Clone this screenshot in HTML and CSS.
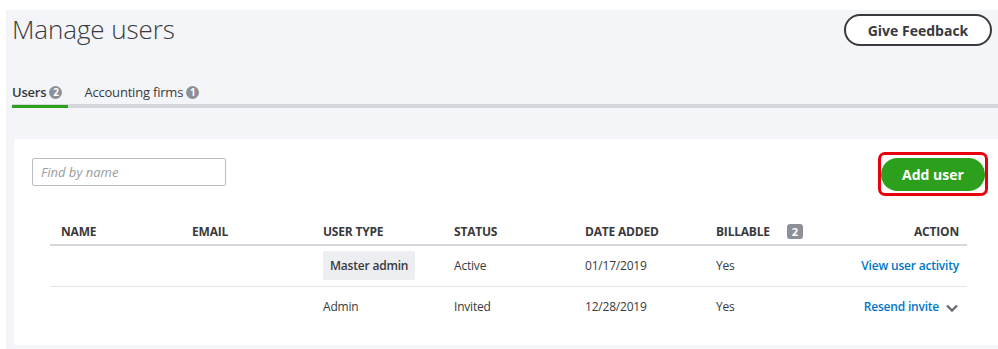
FILE: index.html
```html
<!DOCTYPE html>
<html lang="en">
<head>
  <meta charset="UTF-8">
  <title>Manage users</title>
  <link rel="stylesheet" href="styles.css">
</head>
<body>
  <div class="page">
    <div class="header">
      <h1>Manage users</h1>
      <button class="feedback">Give Feedback</button>
    </div>

    <!-- Tabs -->
    <div class="tabs">
      <div class="tab active">Users <span class="count">2</span></div>
      <div class="tab">Accounting firms <span class="count">1</span></div>
    </div>

    <div class="card">
      <div class="toolbar">
        <input type="text" class="search" placeholder="Find by name">
        <div class="highlight">
          <button class="add-user">Add user</button>
        </div>
      </div>

      <table>
        <thead>
          <tr>
            <th>NAME</th>
            <th>EMAIL</th>
            <th>USER TYPE</th>
            <th>STATUS</th>
            <th>DATE ADDED</th>
            <th>BILLABLE <span class="billable">2</span></th>
            <th class="right">ACTION</th>
          </tr>
        </thead>
        <tbody>
          <tr>
            <td></td>
            <td></td>
            <td><span class="pill">Master admin</span></td>
            <td>Active</td>
            <td>01/17/2019</td>
            <td>Yes</td>
            <td class="right"><a href="#">View user activity</a></td>
          </tr>
          <tr>
            <td></td>
            <td></td>
            <td>Admin</td>
            <td>Invited</td>
            <td>12/28/2019</td>
            <td>Yes</td>
            <td class="right">
              <a href="#">Resend invite</a>
              <svg class="chevron" width="14" height="14" viewBox="0 0 14 14"><path d="M2 4.5l5 5 5-5" fill="none" stroke="#6b6c72" stroke-width="2.4"/></svg>
            </td>
          </tr>
        </tbody>
      </table>
    </div>
  </div>
</body>
</html>
```

FILE: styles.css
```css
* {
  margin: 0;
  padding: 0;
  box-sizing: border-box;
  font-family: 'Open Sans', 'Liberation Sans', sans-serif;
}
body {
  background: #fff;
  color: #393a3d;
  padding: 10px 0 0 6px;
}
.page {
  background: #f4f5f8;
  height: 339px;
  padding: 0 0 0 6px;
}
.header {
  display: flex;
  justify-content: space-between;
  align-items: flex-start;
  padding: 4px 6px 0 0;
}
h1 {
  font-size: 26px;
  font-weight: 300;
  color: #393a3d;
  letter-spacing: -0.1px;
  margin-top: -3px;
}
.feedback {
  width: 148px;
  height: 32px;
  border: 2px solid #393a3d;
  border-radius: 16px;
  background: #fff;
  font-size: 14px;
  font-weight: 700;
  color: #393a3d;
}
/* Tabs */
.tabs {
  display: flex;
  margin-top: 36px;
  border-bottom: 4px solid #d4d7dc;
}
.tab {
  font-size: 13px;
  color: #393a3d;
  padding: 0 16px 4px 0;
  margin-bottom: -4px;
  border-bottom: 3px solid transparent;
  display: flex;
  align-items: center;
  gap: 3px;
  letter-spacing: -0.2px;
}
.tab.active {
  font-weight: 600;
  border-bottom-color: #2ca01c;
  padding-right: 6px;
  margin-right: 16px;
}
.count {
  display: inline-flex;
  justify-content: center;
  align-items: center;
  width: 13px;
  height: 13px;
  border-radius: 50%;
  background: #8d9096;
  color: #fff;
  font-size: 10px;
  font-weight: 700;
}
/* Card */
.card {
  background: #fff;
  margin: 31px 0 0 2px;
  height: 206px;
  padding: 19px 10px 0 18px;
}
.toolbar {
  display: flex;
  justify-content: space-between;
  align-items: flex-start;
}
.search {
  width: 194px;
  height: 28px;
  border: 1px solid #babec5;
  border-radius: 2px;
  padding: 0 8px;
  font-size: 13px;
}
.search::placeholder {
  color: #9a9ca1;
  font-style: italic;
}
.highlight {
  margin-top: -6px;
  padding: 3px 0 2px;
  border: 3px solid #e8000e;
  border-radius: 7px;
}
.add-user {
  display: block;
  width: 104px;
  height: 33px;
  border: none;
  border-radius: 17px;
  background: #2ca01c;
  color: #fff;
  font-size: 14px;
  font-weight: 700;
}
/* Table */
table {
  width: 917px;
  margin: 22px 0 0 18px;
  border-collapse: collapse;
  table-layout: fixed;
}
th, td {
  text-align: left;
  padding: 0 0 0 11px;
  font-size: 12px;
  letter-spacing: -0.2px;
}
th {
  font-weight: 700;
  color: #393a3d;
  height: 27px;
  border-bottom: 2px solid #d4d7dc;
  vertical-align: middle;
}
td {
  height: 41px;
  color: #393a3d;
  border-bottom: 1px solid #e3e5e8;
}
tbody tr:last-child td {
  border-bottom: none;
}
th.right, td.right {
  text-align: right;
  padding-right: 8px;
}
.billable {
  display: inline-block;
  background: #8d9096;
  color: #fff;
  font-size: 11px;
  padding: 0 5px;
  border-radius: 3px;
  margin-left: 14px;
  line-height: 15px;
}
.pill {
  display: inline-block;
  background: #eceef1;
  border-radius: 2px;
  padding: 6px 7px;
  font-weight: 600;
}
a {
  color: #0077c5;
  text-decoration: none;
  font-weight: 600;
}
.chevron {
  vertical-align: middle;
  margin-left: 3px;
}
```
